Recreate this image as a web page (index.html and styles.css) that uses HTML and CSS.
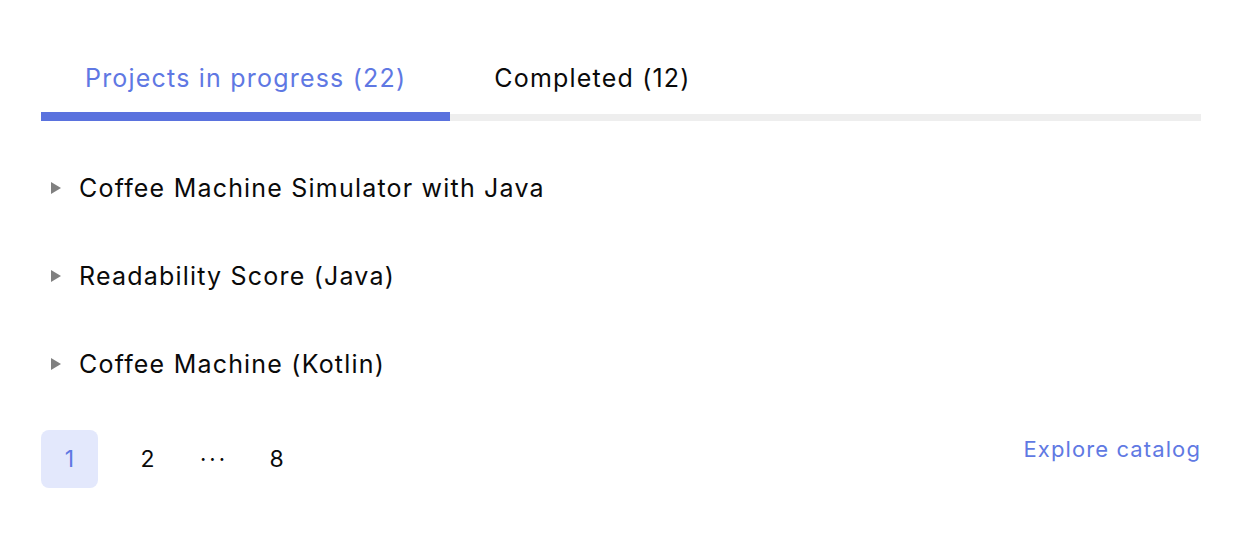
FILE: index.html
```html
<!DOCTYPE html>
<html lang="en">
<head>
<meta charset="utf-8">
<title>Projects</title>
<link rel="stylesheet" href="styles.css">
</head>
<body>
<main class="page">
  <nav class="tabs">
    <a class="tab active">Projects in progress (22)</a>
    <a class="tab">Completed (12)</a>
  </nav>
  <ul class="projects">
    <li class="project"><span class="caret"></span>Coffee Machine Simulator with Java</li>
    <li class="project"><span class="caret"></span>Readability Score (Java)</li>
    <li class="project"><span class="caret"></span>Coffee Machine (Kotlin)</li>
  </ul>
  <div class="footer">
    <div class="pager">
      <span class="pg current">1</span>
      <span class="pg">2</span>
      <span class="dots">···</span>
      <span class="pg">8</span>
    </div>
    <a class="explore">Explore catalog</a>
  </div>
</main>
</body>
</html>
```
FILE: styles.css
```css
* { box-sizing: border-box; }
html, body { margin: 0; background: #fff; }
body {
  font-family: Inter, "Noto Sans", "Liberation Sans", sans-serif;
  color: #0a0a0a;
}
.page {
  width: 1160px;
  margin-left: 41px;
  padding-top: 62px;
}
.tabs {
  display: flex;
  box-shadow: inset 0 -7px 0 #eeeeee;
}
.tab {
  font-size: 25px;
  letter-spacing: 1.2px;
  line-height: 32px;
  padding: 0 44px 18px;
  border-bottom: 9px solid transparent;
  color: #0a0a0a;
}
.tab.active {
  color: #5f78e3;
  border-bottom-color: #5a72de;
}
.projects {
  list-style: none;
  margin: 23px 0 0;
  padding: 0;
}
.project {
  height: 88px;
  display: flex;
  align-items: center;
  font-size: 25px;
  letter-spacing: 1.2px;
  color: #0a0a0a;
}
.caret {
  flex: none;
  width: 0;
  height: 0;
  border-top: 6px solid transparent;
  border-bottom: 6px solid transparent;
  border-left: 10px solid #808080;
  margin: 0 18px 0 10px;
}
.footer {
  margin-top: 22px;
  display: flex;
  justify-content: space-between;
  align-items: flex-start;
}
.pager {
  display: flex;
  gap: 21px;
  align-items: center;
}
.pg {
  width: 57px;
  height: 58px;
  border-radius: 8px;
  display: flex;
  align-items: center;
  justify-content: center;
  font-size: 23px;
  color: #0a0a0a;
}
.pg.current {
  background: #e3e8fc;
  color: #5f78e3;
}
.dots {
  width: 30px;
  text-align: center;
  font-size: 22px;
  letter-spacing: 3px;
  text-indent: 3px;
  color: #0a0a0a;
}
.explore {
  font-size: 22px;
  letter-spacing: 1.1px;
  line-height: 30px;
  margin-top: 4px;
  color: #6079e3;
}
```
